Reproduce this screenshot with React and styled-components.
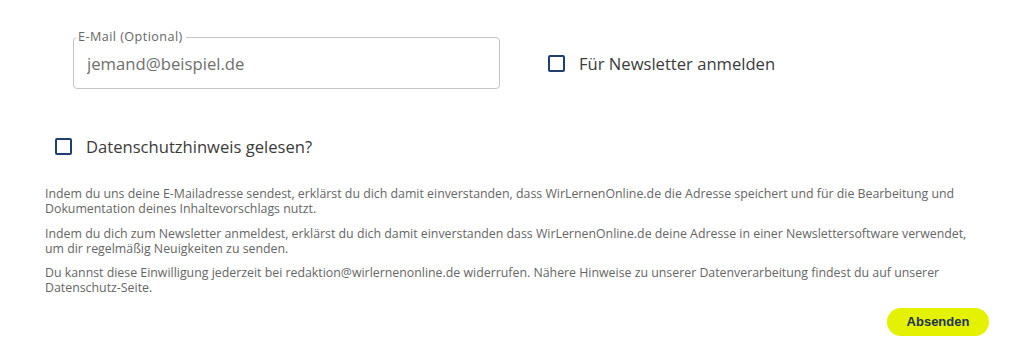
import styled, { createGlobalStyle } from 'styled-components'

const GlobalStyle = createGlobalStyle`
    body {
        margin: 0;
        background: #fff;
        font-family: "Open Sans", "Noto Sans", sans-serif;
    }
`

const App = () => {
    return (
        <>
            <GlobalStyle />
            <Form>
                <TopRow>
                    <EmailField>
                        <FloatLabel>E-Mail (Optional)</FloatLabel>
                        <EmailInput type="email" placeholder="jemand@beispiel.de" />
                    </EmailField>
                    <CheckLabel>
                        <Box type="checkbox" />
                        <span>Für Newsletter anmelden</span>
                    </CheckLabel>
                </TopRow>
                <PrivacyRow>
                    <CheckLabel>
                        <Box type="checkbox" />
                        <span>Datenschutzhinweis gelesen?</span>
                    </CheckLabel>
                </PrivacyRow>
                <Notes>
                    <Note>
                        Indem du uns deine E-Mailadresse sendest, erklärst du dich damit einverstanden, dass WirLernenOnline.de die Adresse speichert und für die Bearbeitung und Dokumentation deines Inhaltevorschlags nutzt.
                    </Note>
                    <Note>
                        Indem du dich zum Newsletter anmeldest, erklärst du dich damit einverstanden dass WirLernenOnline.de deine Adresse in einer Newslettersoftware verwendet, um dir regelmäßig Neuigkeiten zu senden.
                    </Note>
                    <Note>
                        Du kannst diese Einwilligung jederzeit bei redaktion@wirlernenonline.de widerrufen. Nähere Hinweise zu unserer Datenverarbeitung findest du auf unserer Datenschutz-Seite.
                    </Note>
                </Notes>
                <Footer>
                    <Submit type="button">Absenden</Submit>
                </Footer>
            </Form>
        </>
    )
}

export default App

const Form = styled.form`
    width: 944px;
    padding: 37px 0 0 45px;
    display: flex;
    flex-direction: column;
`

const TopRow = styled.div`
    display: flex;
    align-items: center;
    gap: 48px;
    padding-left: 28px;
`

const EmailField = styled.div`
    position: relative;
    width: 427px;
    height: 52px;
    box-sizing: border-box;
    padding: 0 13px;
    border: 1px solid #c4c4c4;
    border-radius: 4px;
    display: flex;
    align-items: center;
`

const FloatLabel = styled.span`
    position: absolute;
    top: -8px;
    left: 2px;
    padding: 0 3px 0 2px;
    background: #fff;
    font-size: 12.6px;
    letter-spacing: 0.45px;
    line-height: 14px;
    color: #666;
`

const EmailInput = styled.input`
    border: none;
    outline: none;
    width: 100%;
    padding: 0;
    font-family: inherit;
    font-size: 16.7px;
    color: #555;
    background: transparent;

    &::placeholder {
        color: #6f6f6f;
    }
`

const CheckLabel = styled.label`
    display: flex;
    align-items: center;
    gap: 14px;
    height: 24px;
    font-size: 16.6px;
    color: #3b3b3b;
    cursor: pointer;
`

const Box = styled.input`
    appearance: none;
    margin: 0;
    width: 17px;
    height: 17px;
    border: 2px solid #1e3f70;
    border-radius: 2px;
    box-sizing: border-box;
    cursor: pointer;
`

const PrivacyRow = styled.div`
    margin-top: 45px;
    padding-left: 10px;
`

const Notes = styled.div`
    margin-top: 28px;
    padding-right: 14px;
    display: flex;
    flex-direction: column;
    gap: 9.5px;
`

const Note = styled.p`
    margin: 0;
    font-size: 12.35px;
    line-height: 15px;
    color: #666;
`

const Footer = styled.div`
    display: flex;
    justify-content: flex-end;
    margin-top: 12.5px;
`

const Submit = styled.button`
    width: 102px;
    height: 28px;
    border: none;
    border-radius: 14px;
    background-color: #e4f100;
    font-family: "Liberation Sans", Arial, sans-serif;
    font-size: 13px;
    font-weight: bold;
    color: #1e3354;
    cursor: pointer;
`
